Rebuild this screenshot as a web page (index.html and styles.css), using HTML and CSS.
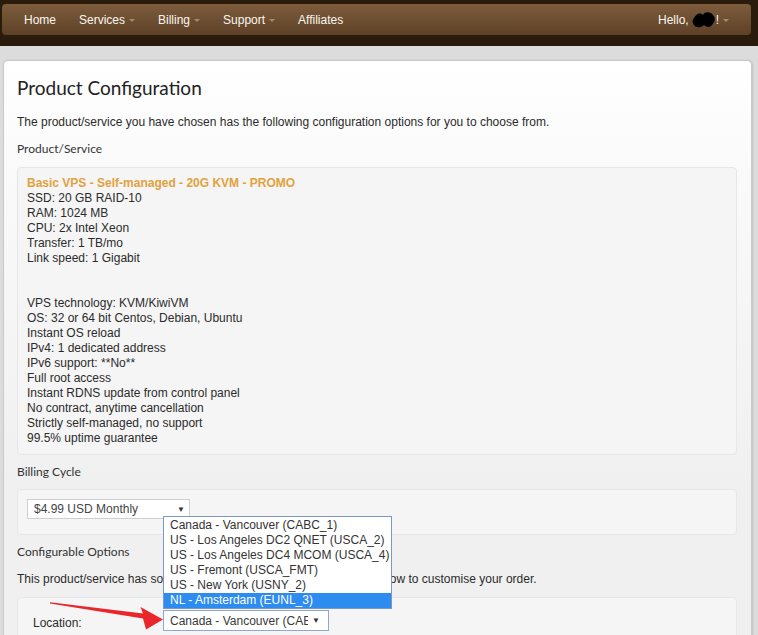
FILE: index.html
```
<!DOCTYPE html>
<html>
<head>
<meta charset="utf-8">
<title>Product Configuration</title>
<link rel="stylesheet" href="styles.css">
</head>
<body>
<header class="topbar">
  <nav class="navbar">
    <ul class="nav-left">
      <li>Home</li>
      <li>Services<span class="caret"></span></li>
      <li>Billing<span class="caret"></span></li>
      <li>Support<span class="caret"></span></li>
      <li>Affiliates</li>
    </ul>
    <div class="nav-right">Hello, <svg class="blob" viewBox="0 0 24 18" width="24" height="18"><path d="M2 7 C4 3 8 1 11 4 C13 0 19 1 21 4 C24 7 23 11 20 14 C18 17 14 16 12 14 C9 17 4 17 2 14 C0 12 0 9 2 7 Z" fill="#000"/></svg>!<span class="caret"></span></div>
  </nav>
</header>
<main class="panel">
  <h1 class="title">Product Configuration</h1>
  <p class="text">The product/service you have chosen has the following configuration options for you to choose from.</p>
  <div class="label">Product/Service</div>
  <div class="well product">
    <div class="pname">Basic VPS - Self-managed - 20G KVM - PROMO</div>
    <div>SSD: 20 GB RAID-10</div>
    <div>RAM: 1024 MB</div>
    <div>CPU: 2x Intel Xeon</div>
    <div>Transfer: 1 TB/mo</div>
    <div>Link speed: 1 Gigabit</div>
    <div class="blank"></div>
    <div class="blank"></div>
    <div>VPS technology: KVM/KiwiVM</div>
    <div>OS: 32 or 64 bit Centos, Debian, Ubuntu</div>
    <div>Instant OS reload</div>
    <div>IPv4: 1 dedicated address</div>
    <div>IPv6 support: **No**</div>
    <div>Full root access</div>
    <div>Instant RDNS update from control panel</div>
    <div>No contract, anytime cancellation</div>
    <div>Strictly self-managed, no support</div>
    <div>99.5% uptime guarantee</div>
  </div>
  <div class="label label-tight">Billing Cycle</div>
  <div class="well billing">
    <div class="select cycle"><span class="sel-text">$4.99 USD Monthly</span><span class="sel-arrow">&#9660;</span></div>
  </div>
  <div class="label label-tight">Configurable Options</div>
  <p class="text text2">This product/service has some options which you can choose from below to customise your order.</p>
  <div class="well options">
    <svg class="annot" viewBox="47 598 120 34" width="120" height="34"><polygon points="50,602.3 143,613.6 140.5,607 163,619.5 146,629.5 143,618.6 50,603.6" fill="#e8262b"/></svg>
    <div class="opt-row">
      <span class="opt-label">Location:</span>
      <div class="select loc">
        <span class="sel-text">Canada - Vancouver (CABC_1)</span><span class="sel-arrow">&#9660;</span>
        <ul class="dropdown">
          <li>Canada - Vancouver (CABC_1)</li>
          <li>US - Los Angeles DC2 QNET (USCA_2)</li>
          <li>US - Los Angeles DC4 MCOM (USCA_4)</li>
          <li>US - Fremont (USCA_FMT)</li>
          <li>US - New York (USNY_2)</li>
          <li class="active">NL - Amsterdam (EUNL_3)</li>
        </ul>
      </div>
    </div>
  </div>
</main>
</body>
</html>
```
FILE: styles.css
```
html {
  overflow: hidden;
}
body {
  margin: 0;
  background: #dcdcdc;
  font-family: "Liberation Sans", Arial, sans-serif;
  font-size: 12px;
  color: #2b2b2b;
}
.topbar {
  background: #2b1b0c;
  padding: 4px 7px 11px 2px;
}
.navbar {
  height: 31px;
  border-radius: 4px;
  background: linear-gradient(#7d5c3c, #5d4127);
  display: flex;
  justify-content: space-between;
  align-items: center;
  padding: 0 22px;
  color: #fbf7f0;
}
.nav-left {
  list-style: none;
  margin: 0;
  padding: 0;
  display: flex;
  gap: 23px;
}
.nav-left li {
  display: flex;
  align-items: center;
}
.caret {
  display: inline-block;
  width: 0;
  height: 0;
  margin-left: 4px;
  margin-top: 1px;
  border-left: 3px solid transparent;
  border-right: 3px solid transparent;
  border-top: 3px solid #a38b72;
}
.nav-right {
  display: flex;
  align-items: center;
  padding-left: 2px;
}
.blob {
  margin-left: 3px;
}
.panel {
  margin: 14px 6px 0 3px;
  border: 1px solid #c9c9c9;
  border-radius: 5px;
  background: linear-gradient(#ffffff 0, #fafafa 110px, #f0f0f0 420px);
  padding: 0 14px 40px 13px;
  box-shadow: 1px 0 2px rgba(0,0,0,0.12);
}
.title {
  font-family: Lato, "Open Sans", sans-serif;
  font-weight: 400;
  font-size: 19px;
  line-height: 24px;
  margin: 15px 0 0;
  color: #222;
}
.text {
  margin: 15px 0 0;
  line-height: 15px;
}
.text2 {
  margin-top: 13px;
}
.label {
  font-family: Lato, "Open Sans", sans-serif;
  font-size: 12px;
  line-height: 15px;
  margin-top: 11px;
  color: #333;
}
.label-tight {
  margin-top: 9px;
}
.well {
  background: #f5f5f5;
  border: 1px solid #e7e7e7;
  border-radius: 4px;
}
.product {
  margin-top: 11px;
  padding: 8px 9px;
  line-height: 15px;
}
.blank {
  height: 15px;
}
.pname {
  color: #e3a13c;
  font-weight: bold;
}
.billing {
  margin-top: 10px;
  padding: 9px 9px 15px;
}
.select {
  position: relative;
  box-sizing: border-box;
  display: flex;
  align-items: center;
  background: #fff;
  border: 1px solid #cfcfcf;
  color: #444;
}
.cycle {
  width: 163px;
  height: 20px;
  padding: 0 4px 0 6px;
}
.sel-text {
  flex: 1;
  white-space: nowrap;
  overflow: hidden;
}
.sel-arrow {
  font-size: 8px;
  color: #333;
  margin-left: 4px;
}
.options {
  position: relative;
  margin-top: 10px;
  padding: 12px 15px 20px;
}
.annot {
  position: absolute;
  left: 29px;
  top: 0;
}
.opt-row {
  display: flex;
  align-items: center;
}
.opt-label {
  width: 130px;
  margin-top: 4px;
}
.loc {
  width: 166px;
  height: 21px;
  padding: 0 8px 0 6px;
  border-color: #8fa8d0;
  color: #3a3a3a;
}
.dropdown {
  position: absolute;
  left: -1px;
  bottom: calc(100% + 2px);
  width: 229px;
  box-sizing: border-box;
  margin: 0;
  padding: 1px 0 0;
  list-style: none;
  background: #fff;
  border: 1px solid #7d97c6;
  color: #333;
}
.dropdown li {
  height: 15px;
  line-height: 15px;
  padding-left: 6px;
  white-space: nowrap;
}
.dropdown li.active {
  background: #2d8cf0;
  color: #fff;
}
```
